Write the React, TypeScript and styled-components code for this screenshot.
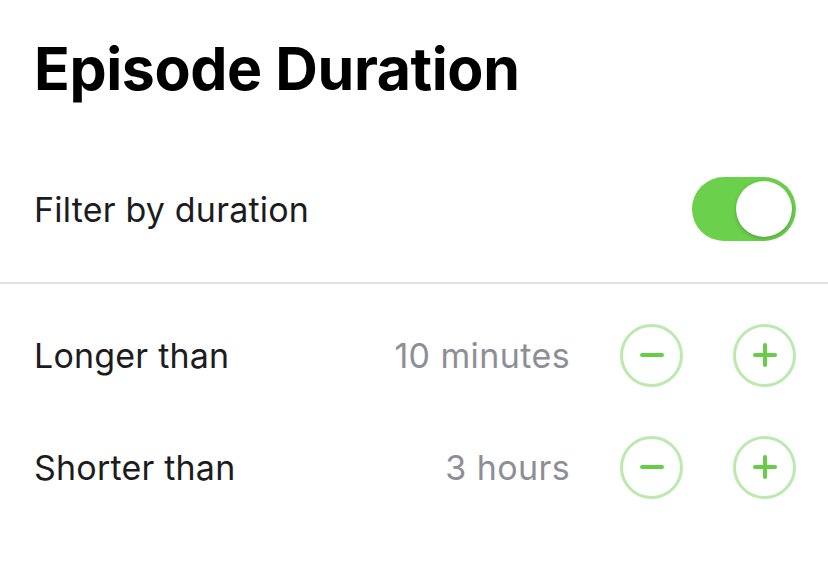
import React, { useState } from "react";
import styled, { createGlobalStyle } from "styled-components";

const Global = createGlobalStyle`
  html, body { margin: 0; padding: 0; background: #fff; }
  body { font-family: Inter, "Noto Sans", "Liberation Sans", sans-serif; -webkit-font-smoothing: antialiased; }
`;

const Page = styled.div`
  width: 828px;
  height: 569px;
  background: #fff;
  overflow: hidden;
`;

const Title = styled.h1`
  margin: 0;
  padding: 32px 32px 0 34px;
  font-size: 59px;
  line-height: 74px;
  font-weight: 700;
  letter-spacing: -0.4px;
  color: #000;
`;

const Row = styled.div<{ $h: number }>`
  display: flex;
  align-items: center;
  height: ${(p) => p.$h}px;
  padding: 0 32px 0 34px;
`;

const Label = styled.span`
  flex: 1;
  font-size: 34px;
  color: #1c1c1e;
  letter-spacing: 0.2px;
`;

const Value = styled.span`
  font-size: 34px;
  color: #8e8e96;
  letter-spacing: 0.4px;
  margin-right: 50px;
`;

const Switch = styled.button<{ $on: boolean }>`
  position: relative;
  width: 104px;
  height: 64px;
  border: none;
  padding: 0;
  border-radius: 32px;
  background: ${(p) => (p.$on ? "#6bd04b" : "#e5e5ea")};
  cursor: pointer;
`;

const Knob = styled.span<{ $on: boolean }>`
  position: absolute;
  top: 4px;
  left: ${(p) => (p.$on ? "44px" : "4px")};
  width: 56px;
  height: 56px;
  border-radius: 50%;
  background: #fff;
  box-shadow: 0 2px 4px rgba(0, 0, 0, 0.18), 0 0 1px rgba(0, 0, 0, 0.2);
`;

const Divider = styled.hr`
  border: none;
  height: 2px;
  background: #e2e2e4;
  margin: 17px 0 15px;
`;

const Stepper = styled.div`
  display: flex;
  gap: 50px;
`;

const RoundBtn = styled.button`
  width: 63px;
  height: 63px;
  border-radius: 50%;
  border: 3px solid #bce9ae;
  background: #fff;
  padding: 0;
  display: flex;
  align-items: center;
  justify-content: center;
  cursor: pointer;
`;

const Minus = () => (
  <svg width="24" height="24" viewBox="0 0 24 24">
    <line x1="2" y1="12" x2="22" y2="12" stroke="#66cd47" strokeWidth="4" strokeLinecap="round" />
  </svg>
);
const Plus = () => (
  <svg width="24" height="24" viewBox="0 0 24 24">
    <line x1="2" y1="12" x2="22" y2="12" stroke="#66cd47" strokeWidth="4" strokeLinecap="round" />
    <line x1="12" y1="2" x2="12" y2="22" stroke="#66cd47" strokeWidth="4" strokeLinecap="round" />
  </svg>
);

export default function App() {
  const [on, setOn] = useState(true);
  return (
    <Page>
      <Global />
      <Title>Episode Duration</Title>
      <Row $h={112} style={{ marginTop: 47 }}>
        <Label>Filter by duration</Label>
        <Switch $on={on} onClick={() => setOn(!on)} aria-label="toggle">
          <Knob $on={on} />
        </Switch>
      </Row>
      <Divider />
      <Row $h={112}>
        <Label>Longer than</Label>
        <Value>10 minutes</Value>
        <Stepper>
          <RoundBtn aria-label="decrease"><Minus /></RoundBtn>
          <RoundBtn aria-label="increase"><Plus /></RoundBtn>
        </Stepper>
      </Row>
      <Row $h={112}>
        <Label>Shorter than</Label>
        <Value>3 hours</Value>
        <Stepper>
          <RoundBtn aria-label="decrease"><Minus /></RoundBtn>
          <RoundBtn aria-label="increase"><Plus /></RoundBtn>
        </Stepper>
      </Row>
    </Page>
  );
}
